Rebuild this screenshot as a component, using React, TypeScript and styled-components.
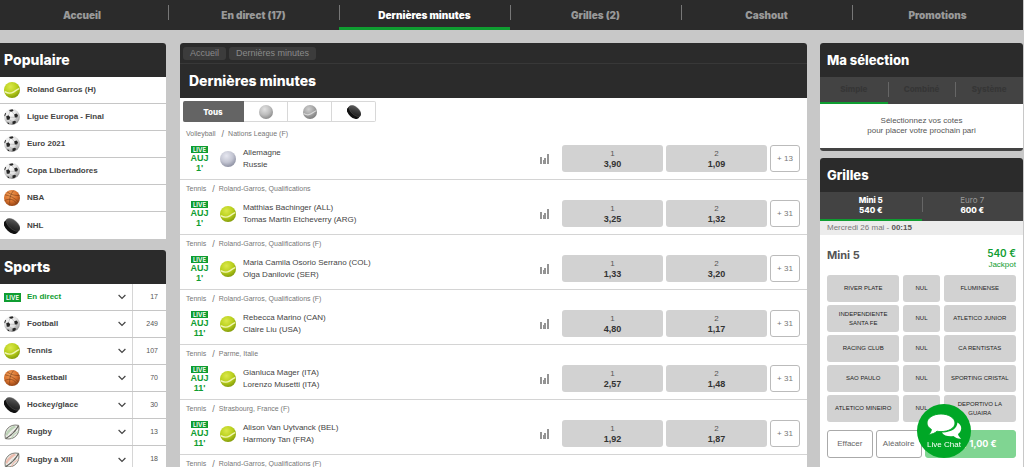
import React from "react";
import styled, { createGlobalStyle } from "styled-components";

const GREEN = "#0f9d31";
const DARK = "#2b2b2b";
const MID = "#434343";
const HEADING = `Inter, "Open Sans", sans-serif`;

const Global = createGlobalStyle`
  * { box-sizing: border-box; }
  body { margin: 0; background: #c8c8c8; color: #444; font: 8px/10px "Liberation Sans", Arial, sans-serif; }
  button { font: inherit; color: inherit; padding: 0; border: 0; background: none; cursor: pointer; }
  a { color: inherit; text-decoration: none; }
  h1, h2, h3, ul { margin: 0; padding: 0; }
  ul { list-style: none; }
`;

const Page = styled.div`
  height: 100vh;
  overflow: hidden;
  padding-right: 1px;
`;

const Nav = styled.nav`
  display: grid;
  grid-template-columns: 168fr repeat(5, 171fr);
  background: ${DARK};
`;

const NavLink = styled.a<{ $active?: boolean }>`
  position: relative;
  height: 30px;
  text-align: center;
  font: 900 10px/30px ${HEADING};
  color: ${(p) => (p.$active ? "#fff" : "#999")};
  border-bottom: ${(p) => (p.$active ? `3px solid ${GREEN}` : "0")};
  &:first-child { padding-right: 4px; }
  &:not(:first-child)::before {
    content: "";
    position: absolute;
    left: 0;
    top: 5px;
    height: 15px;
    border-left: 1px solid #777;
  }
`;

const Columns = styled.div`
  display: flex;
  align-items: flex-start;
  padding-top: 13px;
`;

const LeftColumn = styled.aside`
  flex: 0 0 166px;
  margin-right: 14px;
  display: flex;
  flex-direction: column;
  gap: 11px;
`;

const Main = styled.main`
  flex: 1;
  min-width: 0;
  background: #fff;
  border-radius: 3px;
  overflow: hidden;
`;

const RightColumn = styled.aside`
  flex: 0 0 203px;
  margin-left: 13px;
  display: flex;
  flex-direction: column;
  gap: 7px;
`;

const Panel = styled.section<{ $flush?: boolean }>`
  background: #fff;
  border-radius: ${(p) => (p.$flush ? "0 3px 0 0" : "3px")};
  overflow: hidden;
`;

const PanelTitle = styled.h2<{ $narrow?: boolean }>`
  background: ${DARK};
  color: #fff;
  font: 800 ${(p) => (p.$narrow ? 13 : 14)}px/34px ${HEADING};
  padding-left: ${(p) => (p.$narrow ? 7 : 4)}px;
`;

const SideItem = styled.li`
  display: flex;
  height: 27px;
  background: #fff;
  &:not(:last-child) { border-bottom: 1px solid #c6c6c6; }
`;

const SideLink = styled.a<{ $live?: boolean }>`
  flex: 1;
  display: flex;
  align-items: center;
  padding: 0 5px 0 4px;
  font-weight: 700;
  color: ${(p) => (p.$live ? GREEN : "#444")};
`;

const IconSlot = styled.span`
  flex: 0 0 23px;
  display: flex;
`;

const SideLabel = styled.span`
  flex: 1;
`;

const Count = styled.span`
  width: 34px;
  border-left: 1px solid #d6d6d6;
  padding-right: 8px;
  text-align: right;
  font-size: 7px;
  line-height: 26px;
  color: #555;
`;

const LiveBadge = styled.span<{ $small?: boolean }>`
  width: 17px;
  background: ${GREEN};
  color: #fff;
  text-align: center;
  font: 600 6px/${(p) => (p.$small ? 7 : 9)}px ${HEADING};
`;

const Crumbs = styled.nav`
  display: flex;
  align-items: center;
  gap: 3px;
  height: 21px;
  padding: 0 3px;
  background: ${DARK};
  border-bottom: 1px solid #383838;
`;

const Crumb = styled.a`
  padding: 0 7px;
  border-radius: 3px;
  background: #3c3c3c;
  color: #8a8a8a;
  font-size: 9px;
  line-height: 13px;
`;

const MainTitle = styled.h1`
  background: ${DARK};
  color: #fff;
  font: 800 14px/34px ${HEADING};
  padding-left: 9px;
`;

const Filters = styled.div`
  display: flex;
  padding: 3px;
`;

const FilterButton = styled.button<{ $active?: boolean }>`
  display: flex;
  align-items: center;
  justify-content: center;
  height: 21px;
  width: ${(p) => (p.$active ? 61 : 44)}px;
  border: 1px solid #d8d8d8;
  border-left-width: 0;
  font: 800 8px/10px ${HEADING};
  ${(p) => p.$active && "background: #646464; color: #fff; border-color: #646464; border-radius: 2px 0 0 2px;"}
  &:last-child { border-radius: 0 2px 2px 0; }
`;

const Event = styled.li`
  height: 55px;
  padding: 4px 7px 7px 6px;
  border-bottom: 1px solid #d4d4d4;
`;

const EventPath = styled.div`
  display: flex;
  font-size: 7px;
  line-height: 10px;
  color: #777;
  margin-bottom: 6px;
`;

const Slash = styled.span`
  margin: 0 4px 0 6px;
  font-size: 9px;
`;

const EventBody = styled.div`
  display: flex;
  align-items: center;
  height: 27px;
`;

const Clock = styled.div`
  width: 27px;
  margin-right: 7px;
  padding-top: 1px;
  display: flex;
  flex-direction: column;
  align-items: center;
  color: ${GREEN};
  font-weight: 700;
  font-size: 9px;
  line-height: 10px;
`;

const Teams = styled.a`
  flex: 1;
  line-height: 12px;
  white-space: nowrap;
`;

const StatsButton = styled.button`
  display: flex;
  margin-right: 13px;
`;

const Odd = styled.button`
  width: 101px;
  height: 27px;
  margin-right: 3px;
  padding-top: 1px;
  border-radius: 3px;
  background: #d2d2d2;
  display: flex;
  flex-direction: column;
  align-items: center;
  justify-content: center;
  line-height: 11px;
  color: #555;
  strong { color: #333; font-size: 9px; }
`;

const More = styled.button`
  width: 30px;
  height: 27px;
  border: 1px solid #bbb;
  border-radius: 3px;
  color: #777;
`;

const Tabs = styled.div`
  display: flex;
  background: ${MID};
`;

const Tab = styled.button<{ $active?: boolean; $dim?: boolean }>`
  position: relative;
  flex: 1;
  height: ${(p) => (p.$dim ? 27 : 29)}px;
  padding-bottom: ${(p) => (p.$active ? 2 : 4)}px;
  font: 800 8px/10px ${HEADING};
  color: ${(p) => (p.$dim ? "#363636" : "#fff")};
  ${(p) => p.$active && `border-bottom: 2px solid ${GREEN};`}
  &:not(:first-child)::before {
    content: "";
    position: absolute;
    left: 0;
    top: 5px;
    height: 15px;
    border-left: 1px solid #666;
  }
`;

const TabName = styled.span<{ $muted?: boolean }>`
  display: block;
  ${(p) => p.$muted && "color: #999; font-weight: 400;"}
`;

const EmptySlip = styled.p`
  margin: 0;
  padding: 12px 0;
  height: 47px;
  border-bottom: 3px solid ${MID};
  text-align: center;
  color: #555;
`;

const DateBar = styled.div`
  padding-left: 7px;
  line-height: 14px;
  background: #ececec;
  color: #777;
  strong { color: #555; }
`;

const PoolBody = styled.div`
  padding: 12px 7px 20px;
`;

const PoolHead = styled.div`
  display: flex;
  justify-content: space-between;
  height: 28px;
`;

const PoolTitle = styled.h3`
  font: 700 11px/17px ${HEADING};
  color: #555;
`;

const Jackpot = styled.div`
  text-align: right;
  color: ${GREEN};
  line-height: 9px;
`;

const Amount = styled.div`
  font: 600 10px/13px ${HEADING};
`;

const PoolGrid = styled.div`
  display: grid;
  grid-template-columns: 2fr 1fr 2fr;
  gap: 3px 4px;
`;

const Pick = styled.button`
  height: 27px;
  padding: 0 4px;
  border-radius: 3px;
  background: #d2d2d2;
  color: #222;
  font-size: 6px;
  line-height: 9px;
`;

const PoolActions = styled.div`
  display: grid;
  grid-template-columns: 1fr 1fr 2fr;
  gap: 3px;
  margin-top: 8px;
`;

const Action = styled.button<{ $primary?: boolean }>`
  height: 28px;
  border-radius: 3px;
  border: 1px solid #aaa;
  color: #666;
  ${(p) =>
    p.$primary &&
    `background: #80d592; border-color: #80d592; color: #fff; font: 700 9px/12px ${HEADING}; padding-left: 20px;`}
`;

const Chat = styled.button`
  position: fixed;
  right: 53px;
  bottom: 9px;
  width: 54px;
  height: 54px;
  border-radius: 50%;
  background: #00a726;
  color: #fff;
  display: flex;
  flex-direction: column;
  align-items: center;
  padding-top: 10px;
`;

const Defs = styled.svg`
  position: absolute;
  width: 0;
  height: 0;
`;

type Kind = "tennis" | "football" | "basket" | "puck" | "rugby" | "rugby13" | "volley" | "greyTennis" | "greyBall";

const SharedGradients = () => (
  <Defs aria-hidden="true">
    <defs>
      {[
        ["gTennis", "#dbe84a", "#b8cf1c", "#7e9608"],
        ["gGreyTennis", "#d0d0d0", "#a4a4a4", "#777777"],
        ["gBall", "#e6e7f0", "#c3c5d2", "#878a9c"],
        ["gGreyBall", "#e2e2e2", "#bcbcbc", "#868686"],
        ["gFoot", "#ffffff", "#dedede", "#8a8a8a"],
        ["gBasket", "#f3a25c", "#d8722e", "#8c3f12"],
      ].map(([id, a, b, c]) => (
        <radialGradient key={id} id={id} cx="0.4" cy="0.3" r="0.75">
          <stop offset="0" stopColor={a} />
          <stop offset="0.55" stopColor={b} />
          <stop offset="1" stopColor={c} />
        </radialGradient>
      ))}
      <linearGradient id="gPuck" x1="0" y1="0" x2="1" y2="1">
        <stop offset="0" stopColor="#6a6a6a" />
        <stop offset="0.5" stopColor="#3a3a3a" />
        <stop offset="1" stopColor="#151515" />
      </linearGradient>
    </defs>
  </Defs>
);

const Seam = ({ color }: { color: string }) => (
  <path d="M0.8 9.6C3.6 11.4 7 11.6 9.8 9.8C12 8.4 13.2 7.2 15.2 6.6" fill="none" stroke={color} strokeWidth="1.4" />
);

const Rugby = ({ tint }: { tint: string }) => (
  <g transform="rotate(-45 8 8)">
    <path d="M-1.4 8C1.5 3.6 5 2.4 8 2.4S14.5 3.6 17.4 8C14.5 12.4 11 13.6 8 13.6S1.5 12.4 -1.4 8Z" fill="#eeeeea" stroke="#77776f" strokeWidth="0.9" />
    <path d="M2 5C5.4 3.4 10.6 3.4 14 5L14.6 7.4C10.6 6 5.4 6 1.4 7.4Z" fill={tint} />
    <path d="M-1 8.2C4 9.6 12 9.6 17 8.2" fill="none" stroke="#5b5b54" strokeWidth="1.2" />
    <path d="M5.4 8V10.6M7.2 8.2V10.8M9 8.2V10.8M10.8 8V10.6" stroke="#8a8a82" strokeWidth="0.5" />
    <path d="M3 12C6.4 11 9.6 11 13 12" fill="none" stroke={tint} strokeWidth="1.2" />
  </g>
);

const SportIcon = ({ kind, size = 16 }: { kind: Kind; size?: number }) => (
  <svg width={size} height={size} viewBox="0 0 16 16" aria-hidden="true">
    {kind === "tennis" && (
      <>
        <circle cx="8" cy="8" r="8" fill="url(#gTennis)" />
        <Seam color="#f0f5b4" />
      </>
    )}
    {kind === "greyTennis" && (
      <>
        <circle cx="8" cy="8" r="8" fill="url(#gGreyTennis)" />
        <Seam color="#d8d8d8" />
      </>
    )}
    {kind === "volley" && <circle cx="8" cy="8" r="8" fill="url(#gBall)" />}
    {kind === "greyBall" && <circle cx="8" cy="8" r="8" fill="url(#gGreyBall)" />}
    {kind === "football" && (
      <>
        <circle cx="8" cy="8" r="7.9" fill="url(#gFoot)" />
        <path
          d="M2.2 7.2L4.6 6.2L6.2 8.2L5.4 10.8L2.8 10.8ZM10.2 5.2L12.6 4.4L14 6.2L13.2 8.4L10.8 8.4ZM5.2 1L8.4 0.2L9.6 1.4L8 2.8L5.8 2.6ZM8.4 12.6L11 11.8L12.2 13L10.4 15L8.6 15.2ZM0.3 6.4L1.2 3.8L2 4.6L1 7.4ZM3 13.4L4.8 13.8L5.4 15.4L3.8 14.8Z"
          fill="#262626"
        />
        <path d="M6.2 8.2L10.8 8.4M5.4 10.8L8.4 12.6M4.6 6.2L5.8 2.6M10.2 5.2L8 2.8M13.2 8.4L11 11.8" stroke="#a5a5a5" strokeWidth="0.5" fill="none" />
      </>
    )}
    {kind === "basket" && (
      <>
        <circle cx="8" cy="8" r="8" fill="url(#gBasket)" />
        <path
          d="M1 4.8C6 5.6 11 8 14.6 12.2M9.8 0.4C6.4 4 5 9 5.8 15.6M3 1.8C7 5 11 5.6 15.6 5.6M0.6 10.6C5 8.2 11 9 12.8 14.4"
          fill="none"
          stroke="#7a3e1a"
          strokeWidth="0.6"
        />
      </>
    )}
    {kind === "puck" && (
      <g transform="rotate(42 8 8)">
        <ellipse cx="8" cy="10" rx="8.4" ry="4.4" fill="#111" />
        <path d="M-0.4 6.4H16.4V10H-0.4Z" fill="#191919" />
        <ellipse cx="8" cy="6.2" rx="8.4" ry="4.4" fill="url(#gPuck)" stroke="#777" strokeWidth="0.3" />
      </g>
    )}
    {kind === "rugby" && <Rugby tint="#bcd2b6" />}
    {kind === "rugby13" && <Rugby tint="#ecbcae" />}
  </svg>
);

const Chevron = () => (
  <svg width="10" height="6" viewBox="0 0 10 6" aria-hidden="true">
    <path d="M1.6 1L5 4.4L8.4 1" fill="none" stroke="#444" strokeWidth="1.2" />
  </svg>
);

const StatsIcon = () => (
  <svg width="9" height="10" viewBox="0 0 9 10" aria-hidden="true">
    <path d="M0 3H2V10H0ZM3 6H4V10H3ZM4 4H6V10H4ZM7 0H9V10H7Z" fill="#949494" />
  </svg>
);

const ChatIcon = () => (
  <svg width="35" height="26" viewBox="0 0 35 26" aria-hidden="true">
    <path d="M30.4 8.6C33 10 34.4 12.2 34.2 14.8C34 17 32.8 18.8 31 20C31.4 22 32.6 23.4 34.2 24.6C31 24.8 28.4 23.8 26.4 22C21.6 22.8 17 21.6 14.8 18.4C23.4 18.8 30.4 14.8 30.4 8.6Z" fill="#fff" />
    <path d="M14 0C21.8 0 28 4 28 9C28 14 21.8 17.6 14 17.6C12.6 17.6 11.2 17.5 10 17.2C7.8 19.2 5 20.4 1.6 20.4C3.2 19 4.2 17.4 4.4 15.4C1.6 13.8 0 11.6 0 9C0 4 6.2 0 14 0Z" fill="#fff" stroke="#00a726" strokeWidth="0.9" />
  </svg>
);

const navItems = ["Accueil", "En direct (17)", "Dernières minutes", "Grilles (2)", "Cashout", "Promotions"];

const popular: [Kind, string][] = [
  ["tennis", "Roland Garros (H)"],
  ["football", "Ligue Europa - Final"],
  ["football", "Euro 2021"],
  ["football", "Copa Libertadores"],
  ["basket", "NBA"],
  ["puck", "NHL"],
];

const sports: [Kind | "live", string, number][] = [
  ["live", "En direct", 17],
  ["football", "Football", 249],
  ["tennis", "Tennis", 107],
  ["basket", "Basketball", 70],
  ["puck", "Hockey/glace", 30],
  ["rugby", "Rugby", 13],
  ["rugby13", "Rugby à XIII", 18],
];

interface Match {
  sport: string;
  league: string;
  kind: Kind;
  minute: string;
  home: string;
  away: string;
  odds: [string, string];
  more: number;
}

const matches: Match[] = [
  { sport: "Volleyball", league: "Nations League (F)", kind: "volley", minute: "1'", home: "Allemagne", away: "Russie", odds: ["3,90", "1,09"], more: 13 },
  { sport: "Tennis", league: "Roland-Garros, Qualifications", kind: "tennis", minute: "1'", home: "Matthias Bachinger (ALL)", away: "Tomas Martin Etcheverry (ARG)", odds: ["3,25", "1,32"], more: 31 },
  { sport: "Tennis", league: "Roland-Garros, Qualifications (F)", kind: "tennis", minute: "1'", home: "Maria Camila Osorio Serrano (COL)", away: "Olga Danilovic (SER)", odds: ["1,33", "3,20"], more: 31 },
  { sport: "Tennis", league: "Roland-Garros, Qualifications (F)", kind: "tennis", minute: "11'", home: "Rebecca Marino (CAN)", away: "Claire Liu (USA)", odds: ["4,80", "1,17"], more: 31 },
  { sport: "Tennis", league: "Parme, Italie", kind: "tennis", minute: "11'", home: "Gianluca Mager (ITA)", away: "Lorenzo Musetti (ITA)", odds: ["2,57", "1,48"], more: 31 },
  { sport: "Tennis", league: "Strasbourg, France (F)", kind: "tennis", minute: "11'", home: "Alison Van Uytvanck (BEL)", away: "Harmony Tan (FRA)", odds: ["1,92", "1,87"], more: 31 },
];

const picks: [string, string][] = [
  ["RIVER PLATE", "FLUMINENSE"],
  ["INDEPENDIENTE SANTA FE", "ATLETICO JUNIOR"],
  ["RACING CLUB", "CA RENTISTAS"],
  ["SAO PAULO", "SPORTING CRISTAL"],
  ["ATLETICO MINEIRO", "DEPORTIVO LA GUAIRA"],
];

const Path = ({ sport, league }: { sport: string; league: string }) => (
  <EventPath>
    {sport}
    <Slash>/</Slash>
    {league}
  </EventPath>
);

export default function App() {
  return (
    <Page>
      <Global />
      <SharedGradients />
      <Nav>
        {navItems.map((label) => (
          <NavLink key={label} href="#" $active={label === "Dernières minutes"}>
            {label}
          </NavLink>
        ))}
      </Nav>
      <Columns>
        <LeftColumn>
          <Panel $flush>
            <PanelTitle>Populaire</PanelTitle>
            <ul>
              {popular.map(([kind, label]) => (
                <SideItem key={label}>
                  <SideLink href="#">
                    <IconSlot>
                      <SportIcon kind={kind} />
                    </IconSlot>
                    <SideLabel>{label}</SideLabel>
                  </SideLink>
                </SideItem>
              ))}
            </ul>
          </Panel>
          <Panel $flush>
            <PanelTitle>Sports</PanelTitle>
            <ul>
              {sports.map(([kind, label, count]) => (
                <SideItem key={label}>
                  <SideLink href="#" $live={kind === "live"}>
                    <IconSlot>{kind === "live" ? <LiveBadge>LIVE</LiveBadge> : <SportIcon kind={kind} />}</IconSlot>
                    <SideLabel>{label}</SideLabel>
                    <Chevron />
                  </SideLink>
                  <Count>{count}</Count>
                </SideItem>
              ))}
            </ul>
          </Panel>
        </LeftColumn>

        <Main>
          <Crumbs>
            <Crumb href="#">Accueil</Crumb>
            <Crumb href="#">Dernières minutes</Crumb>
          </Crumbs>
          <MainTitle>Dernières minutes</MainTitle>
          <Filters>
            <FilterButton $active>Tous</FilterButton>
            <FilterButton aria-label="Volleyball">
              <SportIcon kind="greyBall" size={14} />
            </FilterButton>
            <FilterButton aria-label="Tennis">
              <SportIcon kind="greyTennis" size={14} />
            </FilterButton>
            <FilterButton aria-label="Hockey">
              <SportIcon kind="puck" size={14} />
            </FilterButton>
          </Filters>
          <ul>
            {matches.map((m) => (
              <Event key={m.home}>
                <Path sport={m.sport} league={m.league} />
                <EventBody>
                  <Clock>
                    <LiveBadge $small>LIVE</LiveBadge>
                    <span>AUJ</span>
                    <span>{m.minute}</span>
                  </Clock>
                  <IconSlot>
                    <SportIcon kind={m.kind} />
                  </IconSlot>
                  <Teams href="#">
                    {m.home}
                    <br />
                    {m.away}
                  </Teams>
                  <StatsButton aria-label="Statistiques">
                    <StatsIcon />
                  </StatsButton>
                  {m.odds.map((odd, i) => (
                    <Odd key={i}>
                      <span>{i + 1}</span>
                      <strong>{odd}</strong>
                    </Odd>
                  ))}
                  <More>+ {m.more}</More>
                </EventBody>
              </Event>
            ))}
            <Event>
              <Path sport="Tennis" league="Roland-Garros, Qualifications (F)" />
            </Event>
          </ul>
        </Main>

        <RightColumn>
          <Panel>
            <PanelTitle $narrow>Ma sélection</PanelTitle>
            <Tabs>
              <Tab $dim $active>Simple</Tab>
              <Tab $dim>Combiné</Tab>
              <Tab $dim>Système</Tab>
            </Tabs>
            <EmptySlip>
              Sélectionnez vos cotes
              <br />
              pour placer votre prochain pari
            </EmptySlip>
          </Panel>
          <Panel>
            <PanelTitle $narrow>Grilles</PanelTitle>
            <Tabs>
              <Tab $active>
                <TabName>Mini 5</TabName>540 €
              </Tab>
              <Tab>
                <TabName $muted>Euro 7</TabName>600 €
              </Tab>
            </Tabs>
            <DateBar>
              Mercredi 26 mai - <strong>00:15</strong>
            </DateBar>
            <PoolBody>
              <PoolHead>
                <PoolTitle>Mini 5</PoolTitle>
                <Jackpot>
                  <Amount>540 €</Amount>
                  Jackpot
                </Jackpot>
              </PoolHead>
              <PoolGrid>
                {picks.map(([home, away]) => (
                  <React.Fragment key={home}>
                    <Pick>{home}</Pick>
                    <Pick>NUL</Pick>
                    <Pick>{away}</Pick>
                  </React.Fragment>
                ))}
              </PoolGrid>
              <PoolActions>
                <Action>Effacer</Action>
                <Action>Aléatoire</Action>
                <Action $primary>/ 1,00 €</Action>
              </PoolActions>
            </PoolBody>
          </Panel>
        </RightColumn>
      </Columns>
      <Chat>
        <ChatIcon />
        Live Chat
      </Chat>
    </Page>
  );
}
